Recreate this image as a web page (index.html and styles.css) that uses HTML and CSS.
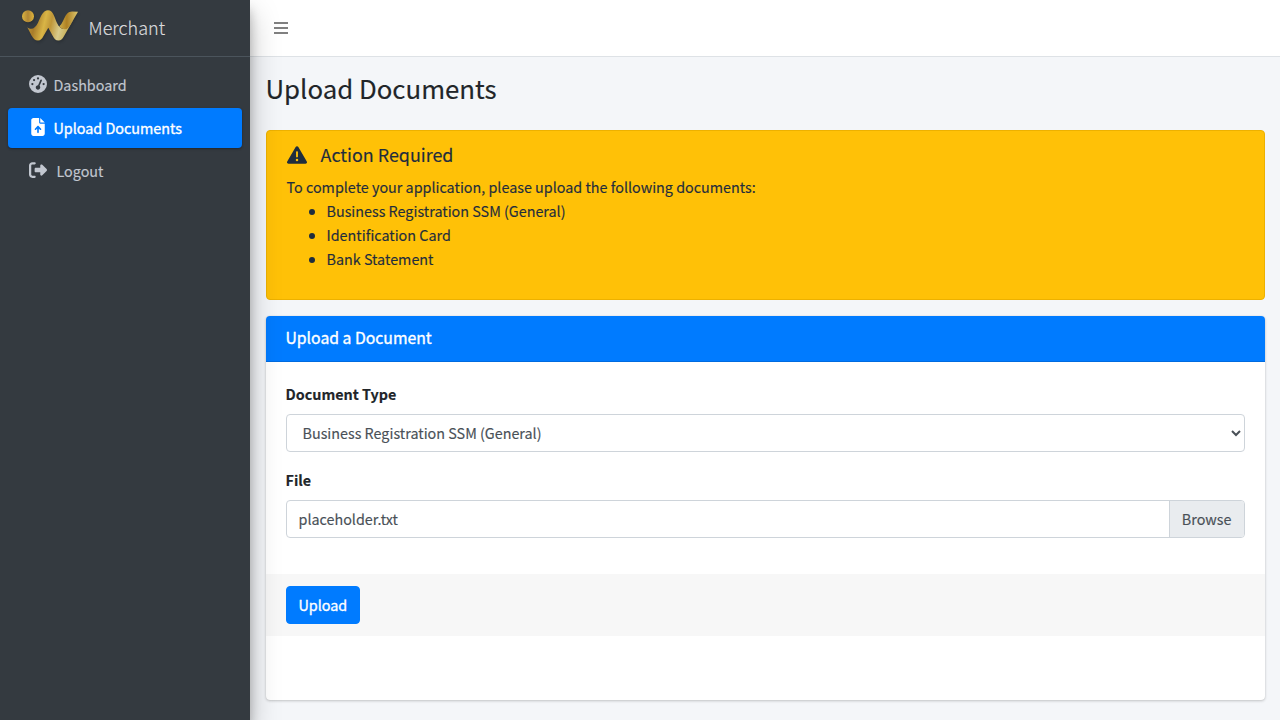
FILE: index.html
```html
<!DOCTYPE html>
<html lang="en">
  <head>
    <meta charset="UTF-8" />
    <meta name="viewport" content="width=device-width, initial-scale=1.0" />
    <title>Upload Documents</title>
    <link rel="stylesheet" href="styles.css">
  </head>
  <body>
    <div class="wrapper">
      <aside class="sidebar">
        <a href="#" class="brand">
          <svg class="brand-logo" viewBox="0 0 60 34" aria-hidden="true">
            <defs>
              <linearGradient id="gold" x1="0" x2="1" y1="0" y2="0.15">
                <stop offset="0" stop-color="#c79f3a" />
                <stop offset="0.22" stop-color="#a87c2a" />
                <stop offset="0.42" stop-color="#d9b546" />
                <stop offset="0.56" stop-color="#bf9638" />
                <stop offset="0.76" stop-color="#d8cb8c" />
                <stop offset="1" stop-color="#c3a748" />
              </linearGradient>
              <linearGradient id="gold-tail" x1="0" x2="1" y1="0" y2="0">
                <stop offset="0" stop-color="#cfae49" />
                <stop offset="0.4" stop-color="#ae8023" />
                <stop offset="1" stop-color="#ddc86f" />
              </linearGradient>
              <linearGradient id="gold-dot" x1="0" x2="1" y1="0" y2="0">
                <stop offset="0" stop-color="#dcb441" />
                <stop offset="0.5" stop-color="#b18634" />
                <stop offset="1" stop-color="#dfb43c" />
              </linearGradient>
            </defs>
            <circle cx="8" cy="8.3" r="6" fill="url(#gold-dot)" />
            <path fill="url(#gold)" d="M7.300 19.300C12 23 15.500 19.500 18 14.700C21 8 23 2.300 28 2.300C33.500 2.300 34.500 10 37 15C39 19.500 42 21.500 45 21C48 20 51 15 54 10.500L43.800 28.500C42.300 31.300 41 32.500 38.500 32.500C35.500 32.500 34 30.500 32.500 27.500L28.300 19.800L23.500 28C22 30.800 20.500 32.500 18 32.500C15 32.500 13.300 30.500 11.500 27.500Z" />
            <path fill="url(#gold-tail)" d="M39.300 18.300C44 15 44.500 3.500 52 3.500L58 3.700L53.500 11.500C50.500 17 48 21.300 45 21.300C42.500 21.300 40.500 20 39.300 18.300Z" />
          </svg>
          <span class="brand-text">Merchant</span>
        </a>
        <nav class="sidebar-nav">
          <a href="#" class="nav-link">
            <svg class="nav-icon" viewBox="0 0 512 512" aria-hidden="true">
              <path fill="currentColor" d="M0 256a256 256 0 1 1 512 0A256 256 0 1 1 0 256zM288 96a32 32 0 1 0-64 0 32 32 0 1 0 64 0zM256 416c35.300 0 64-28.700 64-64c0-17.400-6.900-33.100-18.100-44.600L366 161.700c5.300-12.100-.2-26.300-12.300-31.600s-26.300 .2-31.600 12.300L257.900 288c-.6 0-1.300 0-1.900 0c-35.300 0-64 28.700-64 64s28.700 64 64 64zM176 144a32 32 0 1 0-64 0 32 32 0 1 0 64 0zM96 288a32 32 0 1 0 0-64 32 32 0 1 0 0 64zm352-32a32 32 0 1 0-64 0 32 32 0 1 0 64 0z" />
            </svg>
            <span>Dashboard</span>
          </a>
          <a href="#" class="nav-link active">
            <svg class="nav-icon" viewBox="-64 0 512 512" aria-hidden="true">
              <path fill="currentColor" d="M64 0C28.700 0 0 28.700 0 64V448c0 35.300 28.700 64 64 64H320c35.300 0 64-28.700 64-64V160H256c-17.700 0-32-14.300-32-32V0H64zM256 0V128H384L256 0zM216 408c0 13.300-10.700 24-24 24s-24-10.700-24-24V305.900l-31 31c-9.400 9.400-24.600 9.400-33.900 0s-9.400-24.600 0-33.900l72-72c9.400-9.400 24.600-9.400 33.900 0l72 72c9.400 9.400 9.400 24.600 0 33.900s-24.600 9.400-33.900 0l-31-31V408z" />
            </svg>
            <span>Upload Documents</span>
          </a>
          <a href="#" class="nav-link logout">
            <svg class="nav-icon" viewBox="0 0 512 512" aria-hidden="true">
              <path fill="currentColor" d="M377.900 105.900L500.700 228.700c7.200 7.200 11.300 17.100 11.300 27.300s-4.100 20.100-11.300 27.300L377.900 406.100c-6.400 6.400-15 9.900-24 9.900c-18.700 0-33.900-15.200-33.900-33.900V320H192c-17.700 0-32-14.300-32-32V224c0-17.700 14.300-32 32-32H320V129.900c0-18.700 15.200-33.900 33.900-33.900c9 0 17.600 3.600 24 9.900zM160 96H96c-17.700 0-32 14.300-32 32V384c0 17.700 14.300 32 32 32h64c17.700 0 32 14.300 32 32s-14.300 32-32 32H96c-53 0-96-43-96-96V128C0 75 43 32 96 32h64c17.700 0 32 14.300 32 32s-14.300 32-32 32z" />
            </svg>
            <span>Logout</span>
          </a>
        </nav>
      </aside>

      <div class="main">
        <header class="navbar">
          <a href="#" class="menu-toggle" aria-label="Toggle menu">
            <span></span>
            <span></span>
            <span></span>
          </a>
        </header>

        <main class="content">
          <h1>Upload Documents</h1>

          <div class="alert">
            <h5>
              <svg class="alert-icon" viewBox="0 0 512 512" aria-hidden="true">
                <path fill="currentColor" d="M256 32c14.200 0 27.300 7.500 34.500 19.800l216 368c7.300 12.400 7.300 27.700 .2 40.100S486.300 480 472 480H40c-14.300 0-27.600-7.700-34.700-20.100s-7-27.800 .2-40.100l216-368C228.700 39.500 241.800 32 256 32zm0 128c-13.300 0-24 10.700-24 24V296c0 13.300 10.700 24 24 24s24-10.700 24-24V184c0-13.300-10.700-24-24-24zm32 224a32 32 0 1 0-64 0 32 32 0 1 0 64 0z" />
              </svg>
              <span>Action Required</span>
            </h5>
            <p>To complete your application, please upload the following documents:</p>
            <ul>
              <li>Business Registration SSM (General)</li>
              <li>Identification Card</li>
              <li>Bank Statement</li>
            </ul>
          </div>

          <div class="card">
            <div class="card-header">
              <h3>Upload a Document</h3>
            </div>
            <form>
              <div class="card-body">
                <div class="form-group">
                  <label for="document-type">Document Type</label>
                  <select id="document-type" class="form-control">
                    <option>Business Registration SSM (General)</option>
                    <option>Identification Card</option>
                    <option>Bank Statement</option>
                  </select>
                </div>
                <div class="form-group">
                  <label>File</label>
                  <div class="file-control">
                    <span class="file-name">placeholder.txt</span>
                    <span class="file-browse">Browse</span>
                  </div>
                </div>
              </div>
              <div class="card-footer">
                <button type="button" class="btn">Upload</button>
              </div>
            </form>
          </div>
        </main>
      </div>
    </div>
  </body>
</html>
```

FILE: styles.css
```css
* {
  box-sizing: border-box;
}
body {
  margin: 0;
  font-family: "Noto Sans CJK SC", "Noto Sans", sans-serif;
  font-size: 14.35px;
  line-height: 24px;
  color: #212529;
  background-color: #f4f6f9;
  -webkit-text-stroke: 0.15px;
}
a {
  text-decoration: none;
}
h1,
h3,
h5,
p,
ul {
  margin: 0;
  font-weight: 400;
}
.wrapper {
  display: flex;
  height: 100vh;
  overflow: hidden;
}

/* sidebar */
.sidebar {
  width: 250px;
  flex-shrink: 0;
  z-index: 1;
  background-color: #343a40;
  box-shadow: 0 14px 28px rgba(0, 0, 0, 0.25), 0 10px 10px rgba(0, 0, 0, 0.22);
}
.brand {
  display: flex;
  align-items: center;
  height: 57px;
  padding-left: 20px;
  border-bottom: 1px solid #4b545c;
  color: rgba(255, 255, 255, 0.8);
}
.brand-logo {
  width: 60px;
  height: 34px;
  margin-top: -6px;
  filter: drop-shadow(1px 2px 1px rgba(0, 0, 0, 0.15));
}
.brand-text {
  margin-left: 8.5px;
  padding-bottom: 2px;
  font-size: 18px;
  font-weight: 300;
}
.sidebar-nav {
  display: flex;
  flex-direction: column;
  gap: 3px;
  padding: 8px;
}
.nav-link {
  display: flex;
  align-items: center;
  height: 40px;
  padding: 0 20.5px;
  border-radius: 4px;
  color: #c2c7d0;
}
.nav-link.active {
  color: #fff;
  background-color: #007bff;
  box-shadow: 0 1px 3px rgba(0, 0, 0, 0.12), 0 1px 2px rgba(0, 0, 0, 0.24);
  -webkit-text-stroke: 0.35px;
}
.nav-icon {
  width: 18px;
  height: 18px;
  margin-right: 7px;
  margin-top: -2px;
}
.logout .nav-icon {
  margin-right: 10px;
}

/* top bar */
.main {
  flex: 1;
  min-width: 0;
}
.navbar {
  display: flex;
  align-items: center;
  height: 57px;
  padding-left: 24px;
  background-color: #fff;
  border-bottom: 1px solid #dee2e6;
}
.menu-toggle {
  display: flex;
  flex-direction: column;
  gap: 3px;
  width: 14px;
}
.menu-toggle span {
  height: 2px;
  background-color: #808080;
}

/* content */
.content {
  padding: 13px 15.5px;
}
h1 {
  margin-bottom: 25px;
  font-size: 25.8px;
  line-height: 35px;
}
.alert {
  height: 170px;
  padding: 12px 20px;
  border: 1px solid #edb100;
  border-radius: 4px;
  background-color: #ffc107;
  color: #1f2d3d;
}
.alert h5 {
  display: flex;
  align-items: center;
  height: 24px;
  margin-bottom: 8px;
  font-size: 17.9px;
}
.alert h5 span {
  padding-bottom: 2px;
}
.alert-icon {
  width: 20px;
  height: 20px;
  margin-right: 14px;
}
.alert ul {
  padding-left: 40px;
}
.card {
  height: 384px;
  margin-top: 16px;
  border-radius: 4px;
  background-color: #fff;
  box-shadow: 0 0 1px rgba(0, 0, 0, 0.125), 0 1px 3px rgba(0, 0, 0, 0.2);
}
.card-header {
  height: 46px;
  padding: 10px 20px;
  border-bottom: 1px solid rgba(0, 0, 0, 0.125);
  border-radius: 4px 4px 0 0;
  background-color: #007bff;
  color: #fff;
  -webkit-text-stroke: 0.35px;
}
.card-header h3 {
  font-size: 15.75px;
}
.card-body {
  padding: 20px;
}
.form-group {
  margin-bottom: 16px;
}
.form-group label {
  display: block;
  margin-bottom: 8px;
  font-weight: 700;
}
.form-control {
  display: block;
  width: 100%;
  height: 38px;
  padding: 5px 12px 7px;
  border: 1px solid #ced4da;
  border-radius: 4px;
  background-color: #fff;
  color: #495057;
  font: inherit;
}
.file-control {
  display: flex;
  height: 38px;
  border: 1px solid #ced4da;
  border-radius: 4px;
  color: #495057;
  overflow: hidden;
}
.file-name {
  flex: 1;
  padding: 6px 12px;
}
.file-browse {
  padding: 6px 12px;
  border-left: 1px solid #ced4da;
  background-color: #e9ecef;
}
.card-footer {
  padding: 12px 20px;
  background-color: #f7f7f7;
}
.btn {
  display: block;
  height: 38px;
  padding: 6px 12px;
  border: 1px solid #007bff;
  border-radius: 4px;
  background-color: #007bff;
  color: #fff;
  font: inherit;
  -webkit-text-stroke: 0.35px;
}
```
